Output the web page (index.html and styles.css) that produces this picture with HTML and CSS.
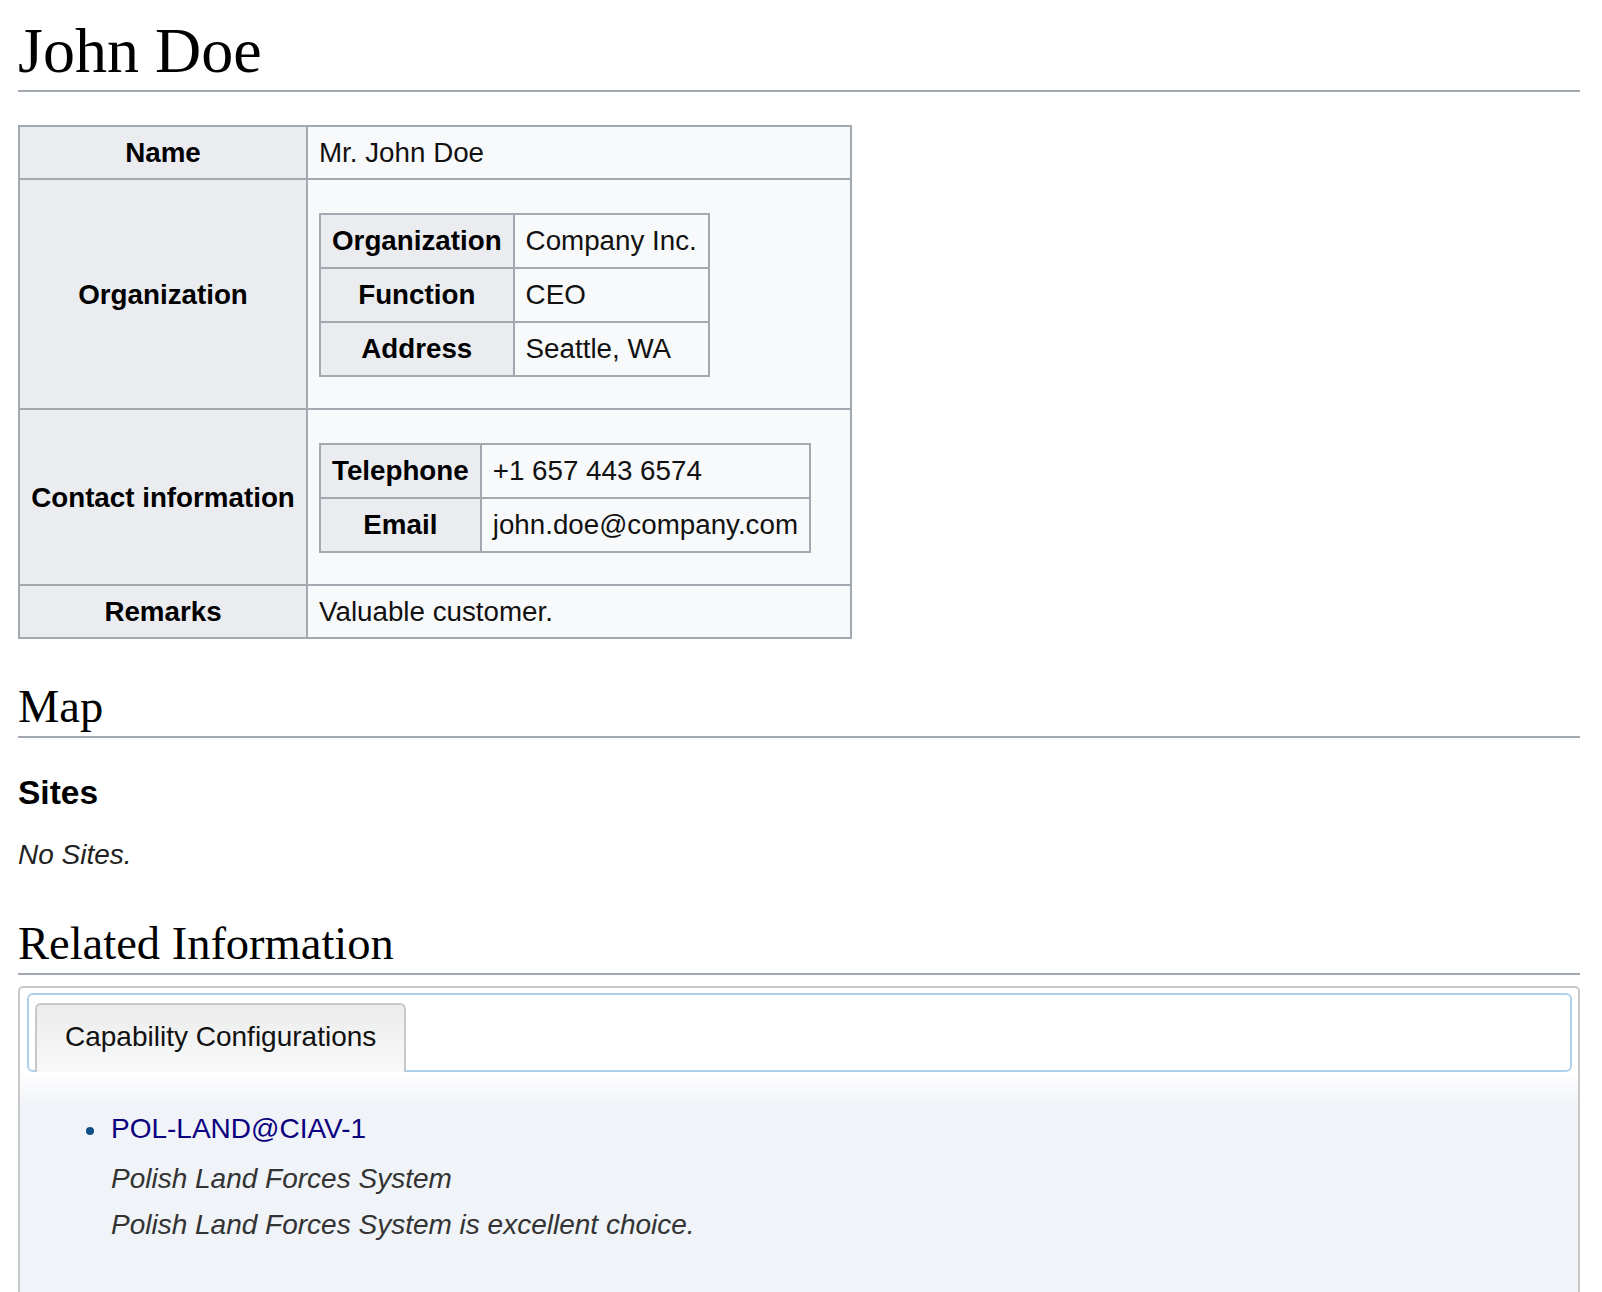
FILE: index.html
```html
<!DOCTYPE html>
<html lang="en">
<head>
<meta charset="utf-8">
<title>John Doe</title>
<link rel="stylesheet" href="styles.css">
</head>
<body>
<main class="page">
  <h1 class="page-title">John Doe</h1>

  <table class="wikitable infobox">
    <tr>
      <th class="label">Name</th>
      <td>Mr. John Doe</td>
    </tr>
    <tr>
      <th class="label">Organization</th>
      <td>
        <table class="wikitable nested">
          <tr><th>Organization</th><td>Company Inc.</td></tr>
          <tr><th>Function</th><td>CEO</td></tr>
          <tr><th>Address</th><td>Seattle, WA</td></tr>
        </table>
      </td>
    </tr>
    <tr>
      <th class="label">Contact information</th>
      <td>
        <table class="wikitable nested">
          <tr><th>Telephone</th><td>+1 657 443 6574</td></tr>
          <tr><th>Email</th><td>john.doe@company.com</td></tr>
        </table>
      </td>
    </tr>
    <tr>
      <th class="label">Remarks</th>
      <td>Valuable customer.</td>
    </tr>
  </table>

  <h2 class="section">Map</h2>
  <h3 class="subsection">Sites</h3>
  <p class="empty"><i>No Sites.</i></p>

  <h2 class="section">Related Information</h2>
  <div class="tabs">
    <ul class="tabs-nav">
      <li class="tab tab-active">Capability Configurations</li>
    </ul>
    <div class="tabs-panel">
      <ul class="cap-list">
        <li class="cap-item">
          <span class="bullet"></span>
          <div class="cap-body">
            <a class="cap-link" href="#">POL-LAND@CIAV-1</a>
            <div class="cap-desc"><i>Polish Land Forces System</i><br><i>Polish Land Forces System is excellent choice.</i></div>
          </div>
        </li>
      </ul>
    </div>
  </div>
</main>
</body>
</html>
```

FILE: styles.css
```css
html, body {
  margin: 0;
  padding: 0;
  background: #ffffff;
}

body {
  font-family: "Liberation Sans", Arial, sans-serif;
  font-size: 28px;
  color: #111;
}

.page {
  padding: 0 22px 0 18px;
}

.page-title {
  margin: 0;
  padding: 16px 0 4px;
  font-family: "Liberation Serif", "Times New Roman", serif;
  font-weight: normal;
  font-size: 64px;
  line-height: 70px;
  color: #000;
  border-bottom: 2px solid #a2a9b1;
}

.wikitable {
  border-collapse: collapse;
  background: #f8f9fa;
  color: #111;
  font-size: 27.75px;
}

.wikitable th,
.wikitable td {
  border: 2px solid #a2a9b1;
  line-height: 42px;
}

.wikitable th {
  background: #eaecf0;
  color: #000;
  font-weight: bold;
  text-align: center;
  white-space: nowrap;
}

.wikitable td {
  text-align: left;
}

.infobox {
  margin-top: 33px;
  width: 834px;
}

.infobox > tbody > tr > th,
.infobox > tbody > tr > td {
  padding: 5px 11px 4px;
}

.infobox th.label {
  width: 264px;
}

.nested {
  margin: 28px 0 27px;
  font-size: 27.75px;
}

.nested th,
.nested td {
  padding: 5px 11px;
}

.section {
  margin: 43px 0 0;
  padding: 0 0 4px;
  font-family: "Liberation Serif", "Times New Roman", serif;
  font-weight: normal;
  font-size: 46.5px;
  line-height: 50px;
  color: #000;
  border-bottom: 2px solid #a2a9b1;
}

.subsection {
  margin: 37px 0 0;
  font-size: 33.5px;
  line-height: 36px;
  font-weight: bold;
  color: #000;
}

.empty {
  margin: 23px 0 0;
  line-height: 42px;
  color: #222;
}

.tabs {
  margin-top: 11px;
  border: 2px solid #c8c8c8;
  border-radius: 5px;
  padding: 5px 6px 0 7px;
  background: linear-gradient(#ffffff 0, #ffffff 84px, #f0f3f7 118px, #f0f3f7 100%);
}

.tabs-nav {
  list-style: none;
  margin: 0;
  padding: 8px 6px 0;
  display: flex;
  align-items: flex-end;
  border: 2px solid #aed0ea;
  border-radius: 6px;
  background: #ffffff;
}

.tab {
  margin-bottom: -2px;
  padding: 17px 28px 20px;
  font-size: 28px;
  line-height: 30px;
  color: #111;
  border: 2px solid #c8c8c8;
  border-bottom: none;
  border-radius: 6px 6px 0 0;
  background: linear-gradient(#ececec, #f8f9fa);
}

.tabs-panel {
  padding: 36px 20px 60px 59px;
}

.cap-list {
  list-style: none;
  margin: 0;
  padding: 0;
}

.cap-item {
  display: flex;
  align-items: flex-start;
  gap: 17px;
}

.bullet {
  flex: none;
  width: 8px;
  height: 8px;
  margin-top: 19px;
  border-radius: 50%;
  background: #0e4f86;
}

.cap-body {
  line-height: 42px;
}

.cap-link {
  color: #0b0080;
  text-decoration: none;
}

.cap-desc {
  margin-top: 6px;
  line-height: 46px;
  color: #333;
}
```
